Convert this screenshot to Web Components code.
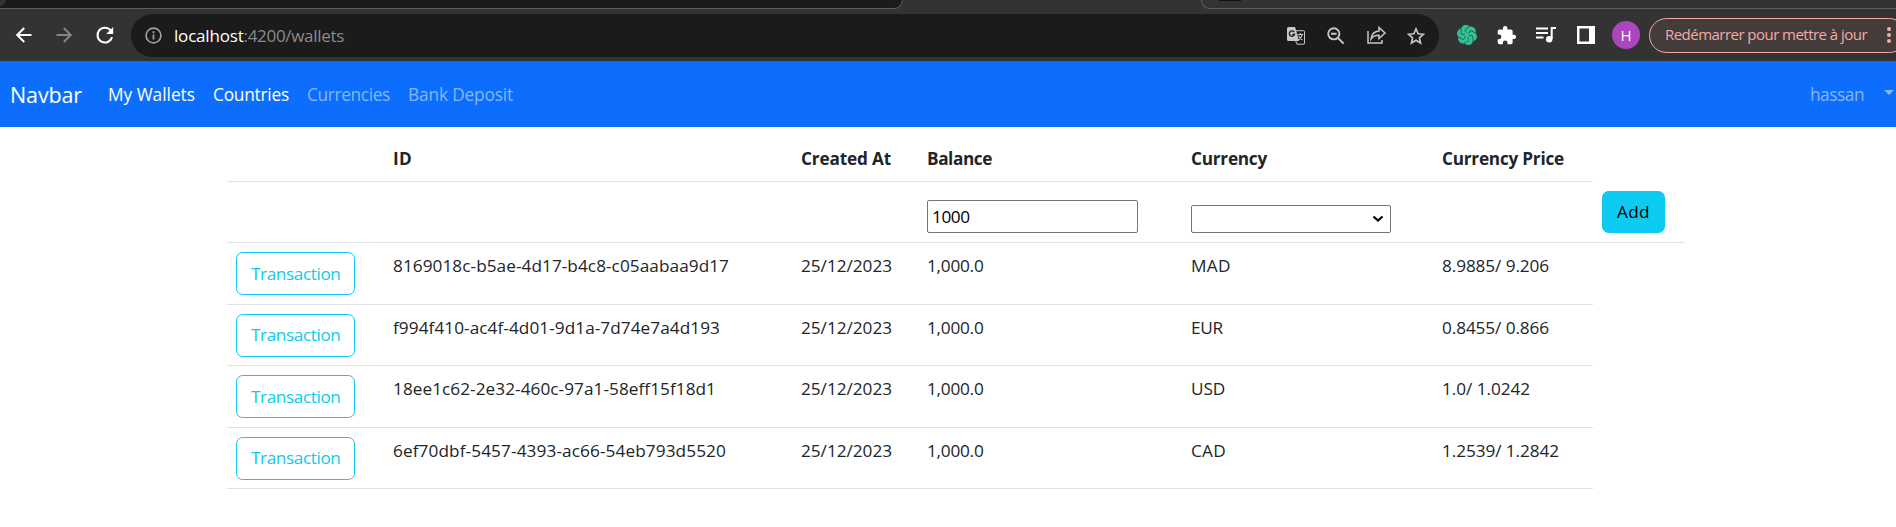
<!DOCTYPE html>
<html lang="fr"><head><meta charset="utf-8"><title>Wallets</title>
<style>
body{margin:0;background:#fff;font-family:"Segoe UI","Open Sans","Noto Sans",sans-serif;color:#212529;overflow:hidden}
</style></head><body>
<wallet-window></wallet-window>
<script>
const define=(name,html,setup)=>customElements.define(name,class extends HTMLElement{
  connectedCallback(){
    if(this.shadowRoot)return;
    this.attachShadow({mode:'open'}).innerHTML=html;
    if(setup)setup(this,this.shadowRoot);
  }
});

/* A label that spaces its letters to fill the width given in "w". */
define('fit-label',`<style>:host{display:inline-block;white-space:pre}span{display:inline-block}</style><span><slot></slot></span>`,(el,root)=>{
  const w=+el.getAttribute('w'),n=el.textContent.length,s=root.querySelector('span');
  if(w&&n){s.style.letterSpacing=((w-s.getBoundingClientRect().width)/n)+'px';}
});

const icons={
 back:[16,'<path d="M15.5 8H1.5M8.2 1 1.2 8l7 7" fill="none" stroke="currentColor" stroke-width="2"/>'],
 forward:[16,'<path d="M.5 8h14M7.8 1l7 7-7 7" fill="none" stroke="currentColor" stroke-width="2"/>'],
 reload:[18,'<path d="M14.6 4.400A7.400 7.400 0 1 0 16 11.200" fill="none" stroke="currentColor" stroke-width="2.100"/><path d="M17.200 1v7h-7z" fill="currentColor"/>'],
 info:[17,'<circle cx="8.5" cy="8.5" r="7.4" fill="none" stroke="currentColor" stroke-width="1.7"/><path d="M8.5 7.5v5M8.5 4.3v1.900" stroke="currentColor" stroke-width="1.800"/>'],
 translate:[18,'<path d="M1.5 0h6.600l4 14H1.500A1.500 1.500 0 0 1 0 12.500v-11A1.500 1.500 0 0 1 1.500 0z" fill="currentColor"/><path d="M8.500 3.700h8a1 1 0 0 1 1 1v11.500a1 1 0 0 1-1 1H10L8.500 13.500" fill="none" stroke="currentColor" stroke-width="1"/><path d="M7.300 5.100A2.700 2.700 0 1 0 7.600 7.400H5.200" fill="none" stroke="#1b1b1b" stroke-width="1.300"/><path d="M10.500 7.500h5.800M13.300 6v1.500M15.300 7.700c-.6 2.500-2 4-4 5.500M11.800 8.800c.7 2 2 3.300 3.700 4.300" fill="none" stroke="currentColor" stroke-width="1.100"/>'],
 zoomout:[18,'<circle cx="6.800" cy="6.800" r="5.600" fill="none" stroke="currentColor" stroke-width="1.900"/><path d="M4 6.800h5.600M11 11l5.600 5.600" stroke="currentColor" stroke-width="1.900"/>'],
 share:[19,'<path d="M1 5v12h14v-3" fill="none" stroke="currentColor" stroke-width="1.500"/><path d="M4 13c.5-4.800 3.300-7.500 8-8V1.500L18 7l-6 5.500V9.300c-3.700 0-6.200 1.200-8 3.700z" fill="none" stroke="currentColor" stroke-width="1.500"/>'],
 star:[18,'<path d="m9 1.800 2.100 5 5.300.5-4 3.500 1.200 5.200L9 13.200 4.400 16l1.200-5.200-4-3.500 5.300-.5z" fill="none" stroke="currentColor" stroke-width="1.600"/>'],
 knot:[24,'<path fill="#2fc598" d="M22.282 9.821a5.985 5.985 0 0 0-.516-4.911 6.046 6.046 0 0 0-6.510-2.900A6.065 6.065 0 0 0 4.981 4.182a5.985 5.985 0 0 0-3.998 2.900 6.046 6.046 0 0 0 .743 7.097 5.980 5.980 0 0 0 .511 4.911 6.051 6.051 0 0 0 6.515 2.900A5.985 5.985 0 0 0 13.260 24a6.056 6.056 0 0 0 5.772-4.206 5.989 5.989 0 0 0 3.998-2.900 6.056 6.056 0 0 0-.748-7.073z"/><g fill="none" stroke="#2b5f50" stroke-width="1.100">'+[0,60,120,180,240,300].map(a=>`<path d="M12 9.200C9.800 8 9.200 6.200 10.300 4.800l5-2.800" transform="rotate(${a} 12 12)"/>`).join('')+'</g>'],
 puzzle:[24,'<path fill="currentColor" d="M20.500 11H19V7c0-1.100-.9-2-2-2h-4V3.500a2.500 2.500 0 0 0-5 0V5H4c-1.100 0-2 .9-2 2v3.800h1.500a2.700 2.700 0 0 1 0 5.400H2V20c0 1.100.9 2 2 2h3.800v-1.500a2.700 2.700 0 0 1 5.400 0V22H17c1.100 0 2-.9 2-2v-4h1.500a2.500 2.500 0 0 0 0-5z"/>'],
 playlist:[20,'<path d="M0 3.500h12M0 8h12M0 12.500h7.500M20 3h-4.300v11" fill="none" stroke="currentColor" stroke-width="2"/><circle cx="13.200" cy="14.300" r="3.200" fill="currentColor"/>'],
 panel:[18,'<path fill="currentColor" fill-rule="evenodd" d="M0 0h18v18H0zM2.500 2.500v13H12v-13z"/>']
};
define('tool-icon','<style>:host{display:block;flex:none}svg{display:block;width:100%;height:100%;overflow:visible}</style>',(el,root)=>{
  const [box,body]=icons[el.getAttribute('name')],size=el.getAttribute('size')||box;
  el.style.width=el.style.height=size+'px';
  root.innerHTML+=`<svg viewBox="0 0 ${box} ${box}">${body}</svg>`;
});

define('browser-bar',`<style>
:host{display:block;height:62px;background:#333;box-sizing:border-box;border-bottom:1px solid #5c5c5c;font-size:17px;color:#fff;overflow:hidden}
.tabs{display:flex;justify-content:space-between;height:9px;overflow:hidden}
.tab{box-sizing:border-box;height:9px;border:1px solid #5f5f5f;border-top:0}
.left{width:903px;background:radial-gradient(circle at 0 0,#333 5.500px,#1b1b1b 6px);border-left:0;border-radius:0 0 9px 0}
.right{width:695px;border-right:0;border-radius:0 0 0 9px}
.right i{display:block;width:22px;height:1px;background:#111;margin-left:17px}
.bar{display:flex;align-items:center;height:52px}
.omni{display:flex;flex:none;align-items:center;height:43px;width:1308px;box-sizing:border-box;border-radius:22px;background:#1b1b1b;margin:1px 0 0 17px;padding-left:14px;color:#c7c7c7}
.url{margin-left:12px;line-height:24px;color:#8b8b8b;flex:1;display:flex}.url b{font-weight:400;color:#fff}
.av{flex:none;width:28px;height:28px;border-radius:50%;background:#ab47bc;text-align:center;line-height:28px;font-size:15px;margin-left:17px}
.pill{box-sizing:border-box;width:258px;height:35px;border:1px solid #f2aaa2;border-radius:18px;background:#443b3b;color:#f3aca4;margin-left:9px;flex:none;font-size:15px;line-height:33px;padding-left:15px;display:flex;align-items:center}
.pill fit-label{margin-top:-1px}
.dots{width:4px;height:16px;margin-left:20px;display:flex;flex-direction:column;justify-content:space-between}.dots i{width:4px;height:4px;border-radius:50%;background:currentColor}
</style>
<div class="tabs"><div class="tab left"></div><div class="tab right"><i></i></div></div>
<div class="bar">
<tool-icon name="back" style="margin-left:16px"></tool-icon>
<tool-icon name="forward" style="margin-left:24px;color:#858585"></tool-icon>
<tool-icon name="reload" style="margin-left:24px"></tool-icon>
<div class="omni"><tool-icon name="info" style="color:#9aa0a6"></tool-icon>
<div class="url"><b><fit-label w="69.500">localhost</fit-label></b><fit-label w="100.500">:4200/wallets</fit-label></div>
<tool-icon name="translate"></tool-icon><tool-icon name="zoomout" style="margin-left:22px"></tool-icon><tool-icon name="share" style="margin-left:22px"></tool-icon><tool-icon name="star" style="margin:0 14px 0 21px"></tool-icon></div>
<tool-icon name="knot" size="20" style="margin-left:18px"></tool-icon>
<tool-icon name="puzzle" size="21" style="margin-left:19px"></tool-icon>
<tool-icon name="playlist" style="margin-left:19px"></tool-icon>
<tool-icon name="panel" style="margin-left:21px"></tool-icon>
<div class="av">H</div>
<div class="pill"><fit-label w="202">Redémarrer pour mettre à jour</fit-label><div class="dots"><i></i><i></i><i></i></div></div>
</div>`);

define('app-navbar',`<style>
:host{display:flex;align-items:center;height:65px;background:#0d6efd;box-sizing:border-box;padding:0 2px 0 10px;font-size:17.300px;color:#fff;line-height:26px}
.brand{font-size:21.500px;margin-right:26px}.link{margin-right:18px}.dim{color:#86b6fe}
.user{margin-left:auto}.caret{width:0;height:0;border:5px solid transparent;border-top-color:#86b6fe;border-bottom:0;margin:-4px 0 0 20px}
</style>
<fit-label class="brand" w="72">Navbar</fit-label><fit-label class="link" w="87">My Wallets</fit-label><fit-label class="link" w="76">Countries</fit-label><fit-label class="link dim" w="83">Currencies</fit-label><fit-label class="dim" w="105">Bank Deposit</fit-label>
<fit-label class="dim user" w="54">hassan</fit-label><div class="caret"></div>`);

define('action-button',`<style>
:host{display:block;width:max-content}
button{display:block;font:inherit;line-height:26px;height:43px;box-sizing:border-box;border:1px solid #0dcaf0;border-radius:6.600px;background:none;color:#0dcaf0;padding:0 13.500px 0 14px;white-space:nowrap}
:host([solid]) button{background:#0dcaf0;color:#000;height:42px}
</style><button><slot></slot></button>`);

define('wallet-row',`<style>
:host{display:grid;grid-template-columns:157px 408px 126px 264px 251px 160px 92px}
::slotted(*){box-sizing:border-box;height:var(--row,61.500px);padding:var(--top,10px) 0 0 9px;border-bottom:1px solid #dee2e6}
::slotted(.control){padding-top:9px}
</style><slot></slot>`);

define('wallet-table',`<style>
:host{display:block;margin-left:227px;padding-top:11px;font-size:17.200px;line-height:26px}
.head{--row:44px;--top:8px;font-weight:700}
input{display:block;box-sizing:border-box;font:inherit;color:#000;border:1px solid #767676;border-radius:2px;background:#fff;width:211px;height:33px;padding:0 4px;margin:9px 0 0;letter-spacing:-.4px}
.sel{display:flex;align-items:center;justify-content:flex-end;box-sizing:border-box;width:200px;height:28px;border:1px solid #767676;border-radius:2px;margin-top:14px;padding-right:6px}
</style>
<wallet-row class="head"><div></div><div><fit-label w="19">ID</fit-label></div><div><fit-label w="90">Created At</fit-label></div><div><fit-label w="65">Balance</fit-label></div><div><fit-label w="76">Currency</fit-label></div><div><fit-label w="122">Currency Price</fit-label></div></wallet-row>
<wallet-row style="--row:61px"><div></div><div></div><div></div><div class="control"><input value="1000"></div><div class="control"><div class="sel"><svg width="12" height="8" viewBox="0 0 12 8"><path d="m1.500 1.500 4.500 4 4.500-4" fill="none" stroke="#000" stroke-width="2.200"/></svg></div></div><div></div><div class="control"><action-button solid><fit-label w="33">Add</fit-label></action-button></div></wallet-row>
<div id="rows"></div>`,(el,root)=>{
  const data=[['8169018c-b5ae-4d17-b4c8-c05aabaa9d17',336,'MAD',40,'8.9885/ 9.206',107],['f994f410-ac4f-4d01-9d1a-7d74e7a4d193',327,'EUR',32,'0.8455/ 0.866',107],['18ee1c62-2e32-460c-97a1-58eff15f18d1',323,'USD',34,'1.0/ 1.0242',88],['6ef70dbf-5457-4393-ac66-54eb793d5520',333,'CAD',35,'1.2539/ 1.2842',117]];
  root.getElementById('rows').innerHTML=data.map(d=>`<wallet-row><div class="control"><action-button><fit-label w="89.500">Transaction</fit-label></action-button></div><div><fit-label w="${d[1]}">${d[0]}</fit-label></div><div><fit-label w="91">25/12/2023</fit-label></div><div><fit-label w="56.500">1,000.0</fit-label></div><div><fit-label w="${d[3]}">${d[2]}</fit-label></div><div><fit-label w="${d[5]}">${d[4]}</fit-label></div></wallet-row>`).join('');
});

define('wallet-window','<style>:host{display:block;height:527px;overflow:hidden}</style><browser-bar></browser-bar><app-navbar></app-navbar><wallet-table></wallet-table>');
</script></body></html>
